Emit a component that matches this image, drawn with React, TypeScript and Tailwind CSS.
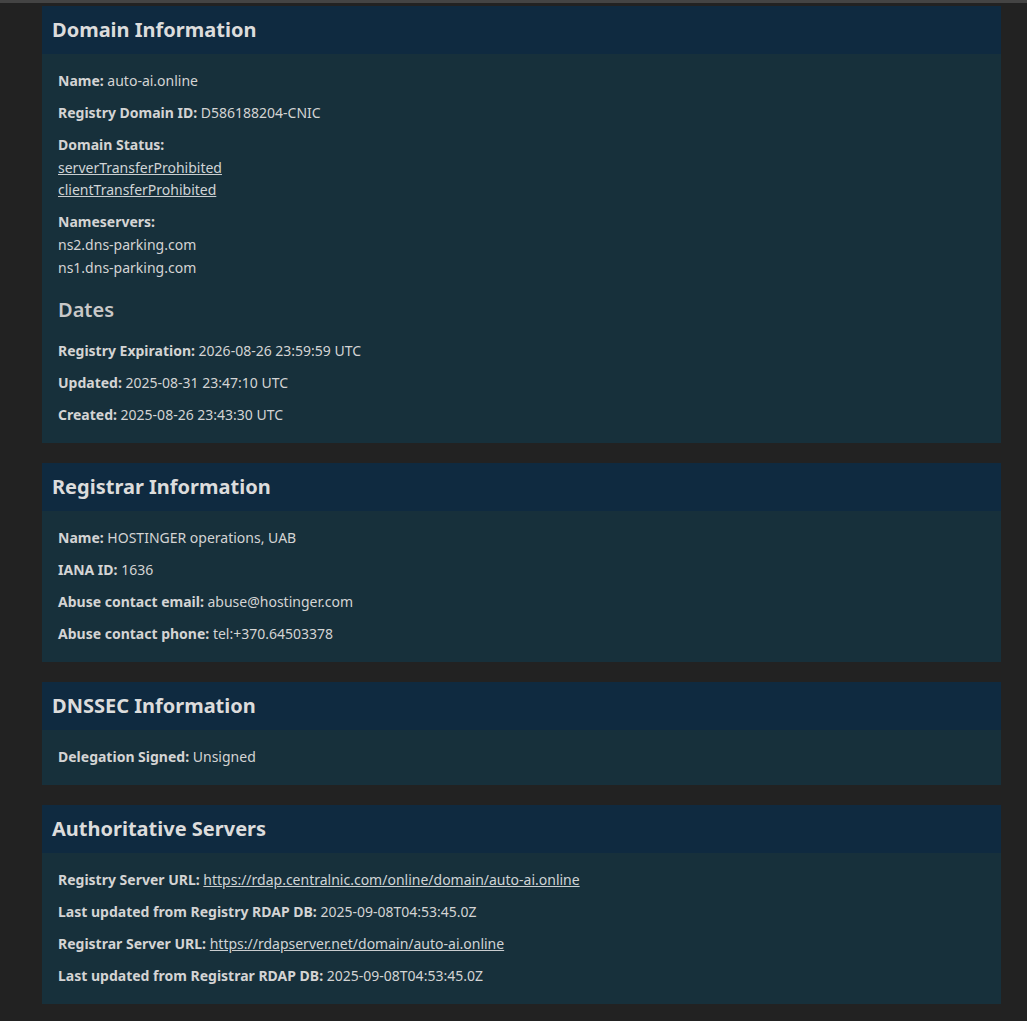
import React from "react";

const Row = ({ label, children }: { label: string; children?: React.ReactNode }) => (
  <p className="m-0 leading-[22.4px]">
    <strong className="font-bold">{label}</strong> {children}
  </p>
);

const Link = ({ children }: { children: React.ReactNode }) => (
  <a href="#" className="underline text-[#d0d4d6] decoration-[#c9cdcf]">
    {children}
  </a>
);

const Panel = ({ title, children }: { title: string; children: React.ReactNode }) => (
  <section className="bg-[#17303b]">
    <h2 className="bg-[#0f2a40] px-[10px] py-[10px] text-[20px] leading-[28px] font-bold text-[#dcdcdc]">{title}</h2>
    <div className="px-[16px] pt-[16px] pb-[7px] flex flex-col">{children}</div>
  </section>
);

export default function App() {
  return (
    <div
      className="min-h-[1021px] bg-[#222222] text-[14px] text-[#d4d4d4]"
      style={{ fontFamily: '"Noto Sans", "Open Sans", sans-serif' }}
    >
      <div className="h-[3px] bg-[#444444]" />
      <div className="ml-[42px] w-[959px] pt-[3px] flex flex-col gap-[20px]">
        <Panel title="Domain Information">
          <div className="mb-[9.6px]"><Row label="Name:">auto-ai.online</Row></div>
          <div className="mb-[9.6px]"><Row label="Registry Domain ID:">D586188204-CNIC</Row></div>
          <div className="leading-[22.6px] mb-[9.6px]">
            <p className="font-bold">Domain Status:</p>
            <p><Link>serverTransferProhibited</Link></p>
            <p><Link>clientTransferProhibited</Link></p>
          </div>
          <div className="leading-[22.6px] mb-[9.6px]">
            <p className="font-bold">Nameservers:</p>
            <p>ns2.dns-parking.com</p>
            <p>ns1.dns-parking.com</p>
          </div>
          <h3 className="mt-[7px] mb-[16.5px] text-[20px] leading-[28px] font-semibold text-[#c8c8c8]">Dates</h3>
          <div className="mb-[9.6px]"><Row label="Registry Expiration:">2026-08-26 23:59:59 UTC</Row></div>
          <div className="mb-[9.6px]"><Row label="Updated:">2025-08-31 23:47:10 UTC</Row></div>
          <div className="mb-[9.6px]"><Row label="Created:">2025-08-26 23:43:30 UTC</Row></div>
        </Panel>
        <Panel title="Registrar Information">
          <div className="mb-[9.6px]"><Row label="Name:">HOSTINGER operations, UAB</Row></div>
          <div className="mb-[9.6px]"><Row label="IANA ID:">1636</Row></div>
          <div className="mb-[9.6px]"><Row label="Abuse contact email:">abuse@hostinger.com</Row></div>
          <div className="mb-[9.6px]"><Row label="Abuse contact phone:">tel:+370.64503378</Row></div>
        </Panel>
        <Panel title="DNSSEC Information">
          <div className="mb-[9.6px]"><Row label="Delegation Signed:">Unsigned</Row></div>
        </Panel>
        <Panel title="Authoritative Servers">
          <div className="mb-[9.6px]">
            <Row label="Registry Server URL:">
              <Link>https://rdap.centralnic.com/online/domain/auto-ai.online</Link>
            </Row>
          </div>
          <div className="mb-[9.6px]"><Row label="Last updated from Registry RDAP DB:">2025-09-08T04:53:45.0Z</Row></div>
          <div className="mb-[9.6px]">
            <Row label="Registrar Server URL:">
              <Link>https://rdapserver.net/domain/auto-ai.online</Link>
            </Row>
          </div>
          <div className="mb-[9.6px]"><Row label="Last updated from Registrar RDAP DB:">2025-09-08T04:53:45.0Z</Row></div>
        </Panel>
      </div>
    </div>
  );
}
